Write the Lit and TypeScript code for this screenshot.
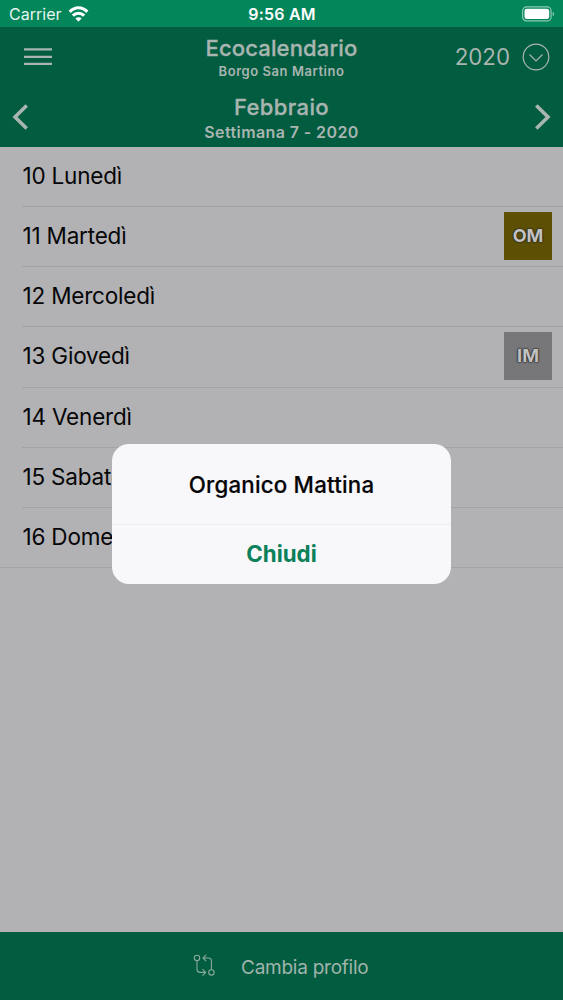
import { LitElement, html, css, nothing } from "lit";
import { customElement, property } from "lit/decorators.js";

interface Day {
  num: number;
  name: string;
  tag?: string;
  kind?: string;
}

const DAYS: Day[] = [
  { num: 10, name: "Lunedì" },
  { num: 11, name: "Martedì", tag: "OM", kind: "organic" },
  { num: 12, name: "Mercoledì" },
  { num: 13, name: "Giovedì", tag: "IM", kind: "mixed" },
  { num: 14, name: "Venerdì" },
  { num: 15, name: "Sabato" },
  { num: 16, name: "Domenica" },
];

@customElement("status-bar")
class StatusBar extends LitElement {
  static styles = css`
    :host {
      display: grid;
      grid-template-columns: 1fr auto 1fr;
      align-items: center;
      height: 27px;
      padding: 0 8px 0 9px;
      box-sizing: border-box;
      background: #03865a;
      color: #fff;
      font-size: 16px;
    }
    .left { display: flex; align-items: center; gap: 6px; color: #e6f5ef; letter-spacing: 0.02px; }
    .time { font-weight: 600; letter-spacing: 0.2px; }
    .right { display: flex; justify-content: flex-end; }
    svg { display: block; }
  `;
  render() {
    return html`
      <div class="left">
        <span>Carrier</span>
        <svg width="21" height="16" viewBox="0 0 22 17" fill="none" stroke="#fff" stroke-width="3.300">
          <path d="M1.700 6.200C7 .4 15 .4 20.300 6.200" />
          <path d="M5 10.300C8.500 6.800 13.500 6.800 17 10.300" />
          <path d="M11 16.700 7.700 13.300C9.500 11.500 12.500 11.500 14.300 13.300Z" fill="#fff" stroke="none" />
        </svg>
      </div>
      <span class="time">9:56 AM</span>
      <div class="right">
        <svg width="33" height="16" viewBox="0 0 33 16">
          <rect x=".6" y=".9" width="28.500" height="14" rx="4" fill="none" stroke="#8fcab5" stroke-width="1.200" />
          <rect x="2.500" y="2.800" width="24.700" height="10.300" rx="2.300" fill="#fff" />
          <path d="M30.700 5.800q1.500.7 1.500 2.200t-1.500 2.200z" fill="#8fcab5" />
        </svg>
      </div>
    `;
  }
}

@customElement("calendar-header")
class CalendarHeader extends LitElement {
  static styles = css`
    :host {
      display: grid;
      grid-template-rows: 60px 60px;
      height: 120px;
      background: #025c40;
      color: #a9b5b0;
    }
    .bar { display: grid; grid-template-columns: 1fr auto 1fr; align-items: center; }
    .start { padding-left: 24px; }
    .end { display: flex; justify-content: flex-end; align-items: center; gap: 12px; padding-right: 13px; }
    .prev { padding-left: 12px; }
    .next { display: flex; justify-content: flex-end; padding-right: 12px; }
    .titles { display: flex; flex-direction: column; align-items: center; font-weight: 600; padding-top: 2px; }
    .month { padding-top: 4px; }
    .title { font-size: 22px; line-height: 26px; font-weight: 500; letter-spacing: 0.15px; -webkit-text-stroke: 0.3px; }
    .month .title { letter-spacing: 0.35px; }
    .place { font-size: 13px; line-height: 20px; letter-spacing: 0.55px; }
    .week { font-size: 16px; line-height: 24px; letter-spacing: 0.4px; }
    .year { font-size: 22.3px; padding-bottom: 1px; }
    svg { display: block; fill: none; stroke: currentColor; }
  `;
  render() {
    return html`
      <div class="bar">
        <div class="start">
          <svg width="28" height="18" viewBox="0 0 28 18" stroke-width="2.200">
            <path d="M0 1.400H28M0 8.900H28M0 15.900H28" />
          </svg>
        </div>
        <div class="titles">
          <span class="title">Ecocalendario</span>
          <span class="place">Borgo San Martino</span>
        </div>
        <div class="end">
          <span class="year">2020</span>
          <svg width="28" height="28" viewBox="0 0 28 28" stroke-width="1.200">
            <circle cx="14" cy="14" r="12.800" />
            <path d="M7.500 11.500 14 18 20.500 11.500" />
          </svg>
        </div>
      </div>
      <div class="bar">
        <div class="prev">
          <svg width="17" height="28" viewBox="0 0 17 28" stroke-width="3.600">
            <path d="M14.700 2.500 3 14 14.700 25.500" />
          </svg>
        </div>
        <div class="titles month">
          <span class="title">Febbraio</span>
          <span class="week">Settimana 7 - 2020</span>
        </div>
        <div class="next">
          <svg width="17" height="28" viewBox="0 0 17 28" stroke-width="3.600">
            <path d="M2.300 2.500 14 14 2.300 25.500" />
          </svg>
        </div>
      </div>
    `;
  }
}

@customElement("day-row")
class DayRow extends LitElement {
  @property({ attribute: false }) day!: Day;
  static styles = css`
    :host { display: block; padding-left: 22px; }
    .row {
      display: flex;
      align-items: center;
      justify-content: space-between;
      height: 60.15px;
      box-sizing: border-box;
      padding: 0 11px 1px 0.5px;
      border-bottom: 1px solid #a3a2a5;
      color: #060607;
      font-size: 22.5px;
      letter-spacing: -0.2px;
    }
    .label { padding-bottom: 1px; }
    .tag {
      display: grid;
      place-items: center;
      width: 48px;
      height: 48px;
      box-sizing: border-box;
      padding-bottom: 1px;
      color: #c3c2c0;
      font-size: 18px;
      font-weight: 700;
      letter-spacing: 0;
      text-shadow: 0 0 1px #222, 0 0 2px #222, 0 0 2px #333;
    }
    .organic { background: #5d5005; }
    .mixed { background: #777678; }
  `;
  render() {
    const d = this.day;
    return html`<div class="row">
      <span class="label">${d.num} ${d.name}</span>
      ${d.tag ? html`<span class="tag ${d.kind}">${d.tag}</span>` : nothing}
    </div>`;
  }
}

@customElement("alert-dialog")
class AlertDialog extends LitElement {
  static styles = css`
    :host {
      display: grid;
      grid-template-rows: 81px 59px;
      width: 339px;
      height: 140px;
      border-radius: 17px;
      overflow: hidden;
      background: #f8f8fb;
      text-align: center;
      font-size: 22.3px;
    }
    .message {
      display: grid;
      place-items: center;
      color: #050506;
      font-weight: 500;
      letter-spacing: 0.2px;
      -webkit-text-stroke: 0.2px;
      border-bottom: 1px solid #eeeef1;
    }
    .close {
      border: 0;
      padding: 0 0 2px;
      background: none;
      font: inherit;
      font-weight: 700;
      color: #0c8059;
    }
  `;
  render() {
    return html`
      <div class="message">Organico Mattina</div>
      <button class="close">Chiudi</button>
    `;
  }
}

@customElement("app-root")
class AppRoot extends LitElement {
  static styles = css`
    :host {
      position: relative;
      display: flex;
      flex-direction: column;
      height: 1000px;
      overflow: hidden;
      background: #b2b1b4;
      font-family: Inter, "Liberation Sans", sans-serif;
    }
    .days { flex: 1; }
    .last { display: block; border-bottom: 1px solid #a3a2a5; margin-top: -1px; }
    .footer {
      display: flex;
      align-items: center;
      height: 68px;
      padding-left: 193px;
      gap: 25px;
      background: #025c40;
      color: #a0b4ac;
      font-size: 19px;
      letter-spacing: -0.25px;
      box-sizing: border-box;
      padding-top: 2px;
    }
    .footer svg { display: block; fill: none; stroke: #8aa99c; stroke-width: 1.1; margin-top: -4px; }
    alert-dialog { position: absolute; left: 112px; top: 444px; }
  `;
  render() {
    return html`
      <status-bar></status-bar>
      <calendar-header></calendar-header>
      <div class="days">
        ${DAYS.map((d) => html`<day-row .day=${d}></day-row>`)}
        <span class="last"></span>
      </div>
      <div class="footer">
        <svg width="23" height="24" viewBox="0 0 23 24">
          <circle cx="4" cy="5" r="2.700" />
          <circle cx="18.400" cy="19.400" r="2.700" />
          <path d="M4 7.700V16.500Q4 19.400 7 19.400H12.500M9.500 16.200 12.700 19.400 9.500 22.600" />
          <path d="M18.400 16.700V8Q18.400 5 15.400 5H10M13.200 1.800 10 5 13.200 8.200" />
        </svg>
        <span>Cambia profilo</span>
      </div>
      <alert-dialog></alert-dialog>
    `;
  }
}
